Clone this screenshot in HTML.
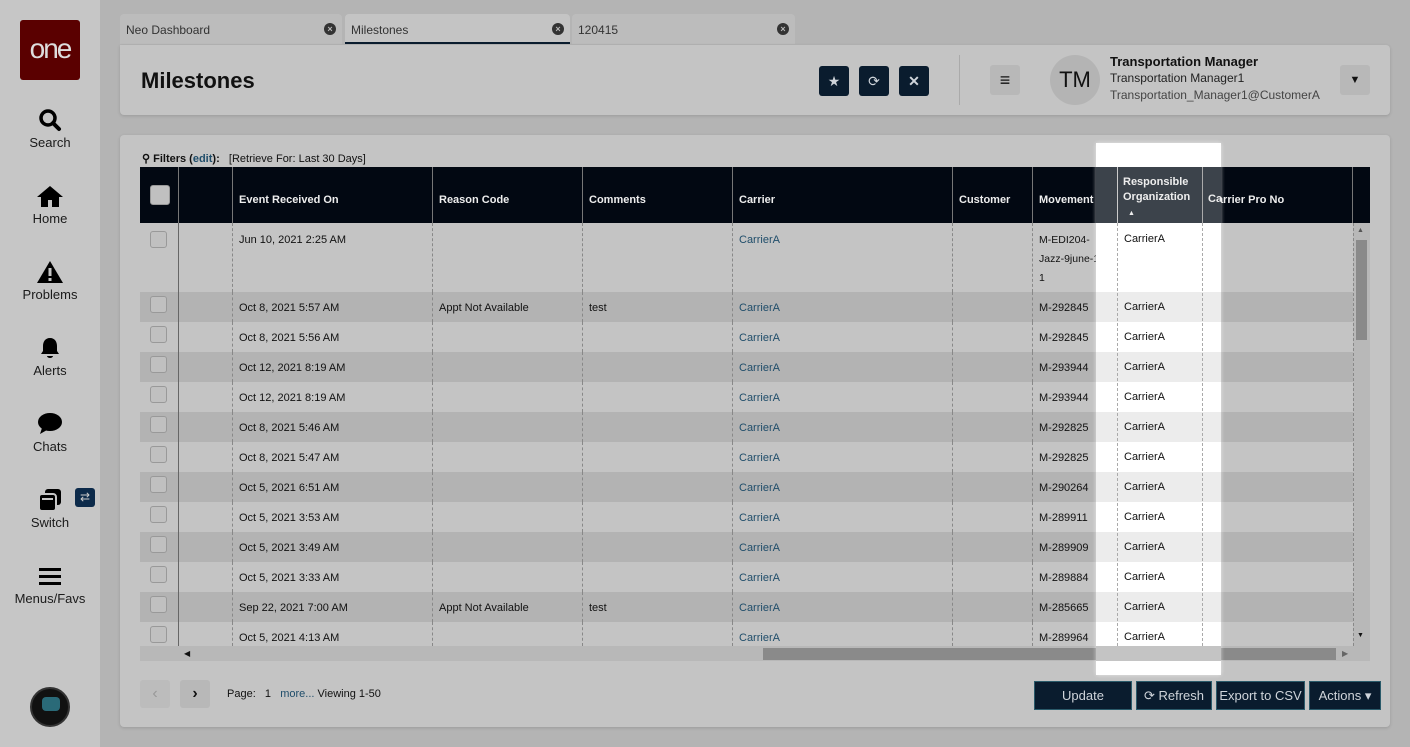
<!DOCTYPE html>
<html><head><meta charset="utf-8"><style>
*{box-sizing:border-box;margin:0;padding:0}
body{width:1410px;height:747px;background:#b4b4b4;font-family:"Liberation Sans",sans-serif;position:relative;overflow:hidden;color:#111}
.a{position:absolute}
.side{left:0;top:0;width:100px;height:747px;background:#c6c6c6}
.nav{width:100px;text-align:center;font-size:13px;color:#1a1a1a}
.tab{top:14px;height:30px;background:#bcbcbc;border-radius:4px 4px 0 0;font-size:12px;padding:9px 6px;color:#333}
.tab .x{position:absolute;right:6px;top:9px;width:12px;height:12px;border-radius:50%;background:#333;color:#bbb;font-size:9px;line-height:12px;text-align:center;font-weight:bold}
.card{background:#c4c4c4;border-radius:4px;box-shadow:0 1px 3px rgba(0,0,0,.15)}
.ib{width:30px;height:30px;background:#0a1c2e;border-radius:3px;color:#cfd4da;text-align:center;line-height:30px;font-size:14px}
.row{position:absolute;left:140px;width:1213px;display:flex;font-size:11px}
.row div{flex:none;border-right:1px dashed #888;padding:8px 6px;line-height:19px}
.row div:nth-child(1){border-right:1px solid #666}
.r div{padding-top:7px!important}
.hd div{color:#eee;font-weight:bold;border-right:1px solid #777!important;display:flex;align-items:center;padding-top:18px}
.cb{width:17px;height:17px;border:1px solid #999;border-radius:3px;background:#c0c0c0;margin-left:4px}
.lnk{color:#1f4d6a}
.btn{top:681px;height:29px;background:#0a1c2e;border:1px solid #2a5a6a;color:#cfd4da;font-size:13px;text-align:center;line-height:27px}
</style></head><body>
<div class="a side"></div>
<div class="a" style="left:20px;top:20px;width:60px;height:60px;background:#5a0000;border-radius:3px;color:#ddd;font-size:28px;text-align:center;line-height:58px;letter-spacing:-2px">one</div>
<div class="a nav" style="top:108px"><svg width="24" height="24" viewBox="0 0 24 24"><circle cx="10" cy="10" r="7" stroke="#000" stroke-width="3.5" fill="none"/><path d="M15 15l6 6" stroke="#000" stroke-width="4" stroke-linecap="round"/></svg><br>Search</div>
<div class="a nav" style="top:184px"><svg width="28" height="24" viewBox="0 0 28 24"><path d="M14 2L1 13h4v10h7v-7h4v7h7V13h4z" fill="#000"/></svg><br>Home</div>
<div class="a nav" style="top:260px"><svg width="28" height="24" viewBox="0 0 28 24"><path d="M14 1L1 23h26z" fill="#000"/><rect x="12.5" y="8" width="3" height="8" fill="#c6c6c6"/><rect x="12.5" y="18" width="3" height="3" fill="#c6c6c6"/></svg><br>Problems</div>
<div class="a nav" style="top:336px"><svg width="24" height="24" viewBox="0 0 24 24"><path d="M12 2c-5 0-7 4-7 8v5l-2 3h18l-2-3v-5c0-4-2-8-7-8z M9 20h6a3 2 0 0 1-6 0z" fill="#000"/></svg><br>Alerts</div>
<div class="a nav" style="top:412px"><svg width="26" height="24" viewBox="0 0 26 24"><ellipse cx="13" cy="10" rx="12" ry="9" fill="#000"/><path d="M5 16l-2 6 7-4z" fill="#000"/></svg><br>Chats</div>
<div class="a nav" style="top:488px"><svg width="26" height="24" viewBox="0 0 26 24"><rect x="8" y="1" width="16" height="16" rx="3" fill="#000"/><rect x="2" y="6" width="17" height="17" rx="3" fill="#000" stroke="#c6c6c6" stroke-width="2"/><rect x="5" y="10" width="11" height="2" fill="#c6c6c6"/></svg><br>Switch</div>
<div class="a" style="left:75px;top:488px;width:20px;height:19px;background:#0c2a4a;border-radius:3px;color:#ccc;font-size:12px;text-align:center;line-height:19px">⇄</div>
<div class="a nav" style="top:566px"><svg width="24" height="22" viewBox="0 0 24 22"><rect x="1" y="2" width="22" height="3" fill="#000"/><rect x="1" y="9" width="22" height="3" fill="#000"/><rect x="1" y="16" width="22" height="3" fill="#000"/></svg><br>Menus/Favs</div>
<div class="a" style="left:30px;top:687px;width:40px;height:40px;border-radius:50%;background:#111;border:2px solid #333"><div class="a" style="left:10px;top:8px;width:18px;height:14px;background:#2a6a78;border-radius:4px"></div></div>

<div class="a tab" style="left:120px;width:222px">Neo Dashboard<span class="x">×</span></div>
<div class="a tab" style="left:345px;width:225px;background:#c4c4c4;border-bottom:2px solid #0a1c2e">Milestones<span class="x">×</span></div>
<div class="a tab" style="left:572px;width:223px">120415<span class="x">×</span></div>

<div class="a card" style="left:120px;top:45px;width:1270px;height:70px;border-radius:0 4px 4px 4px"></div>
<div class="a" style="left:141px;top:68px;font-size:22px;font-weight:bold;color:#111">Milestones</div>
<div class="a ib" style="left:819px;top:66px">★</div>
<div class="a ib" style="left:859px;top:66px">⟳</div>
<div class="a ib" style="left:899px;top:66px;font-weight:bold">✕</div>
<div class="a" style="left:959px;top:55px;width:1px;height:50px;background:#aaa"></div>
<div class="a" style="left:990px;top:65px;width:30px;height:30px;background:#b8b8b8;border-radius:3px;text-align:center;line-height:30px;font-size:18px;font-weight:bold">≡</div>
<div class="a" style="left:1050px;top:55px;width:50px;height:50px;border-radius:50%;background:#b4b4b4;text-align:center;line-height:50px;font-size:22px;color:#111">TM</div>
<div class="a" style="left:1110px;top:54px;font-size:13px;font-weight:bold">Transportation Manager</div>
<div class="a" style="left:1110px;top:71px;font-size:12px;color:#222">Transportation Manager1</div>
<div class="a" style="left:1110px;top:88px;font-size:12px;color:#444">Transportation_Manager1@CustomerA</div>
<div class="a" style="left:1340px;top:65px;width:30px;height:30px;background:#b8b8b8;border-radius:3px;text-align:center;line-height:30px;font-size:11px">▼</div>

<div class="a card" style="left:120px;top:135px;width:1270px;height:592px"></div>
<div class="a" style="left:142px;top:152px;font-size:11px"><b>⚲ Filters (<span class="lnk">edit</span>):</b>&nbsp;&nbsp; [Retrieve For: Last 30 Days]</div>

<div class="a" style="left:140px;top:167px;width:1230px;height:56px;background:#020812"></div>
<div class="row hd" style="top:167px;height:56px">
<div style="width:39px;padding:0"><span class="cb" style="margin-left:10px;width:20px;height:20px"></span></div><div style="width:54px"></div><div style="width:200px">Event Received On</div><div style="width:150px">Reason Code</div><div style="width:150px">Comments</div><div style="width:220px">Carrier</div><div style="width:80px">Customer</div><div style="width:85px">Movement</div><div style="width:85px"></div><div style="width:150px">Carrier Pro No</div></div>

<div class="a" style="left:140px;top:223px;width:1213px;height:423px;background:#c4c4c4"></div>
<div class="row" style="top:223px;height:69px;background:#c4c4c4"><div style="width:39px"><span class="cb" style="display:block"></span></div><div style="width:54px"></div><div style="width:200px">Jun 10, 2021 2:25 AM</div><div style="width:150px"></div><div style="width:150px"></div><div style="width:220px" class="lnk">CarrierA</div><div style="width:80px"></div><div style="width:85px;padding-right:0;font-size:10.5px">M-EDI204-<br>Jazz-9june-10-<br>1</div><div style="width:85px">CarrierA</div><div style="width:150px;border:none"></div></div>
<div class="row r" style="top:292px;height:30px;background:#b3b3b3"><div style="width:39px"><span class="cb" style="display:block;margin-top:-3px"></span></div><div style="width:54px"></div><div style="width:200px">Oct 8, 2021 5:57 AM</div><div style="width:150px">Appt Not Available</div><div style="width:150px">test</div><div style="width:220px" class="lnk">CarrierA</div><div style="width:80px"></div><div style="width:85px">M-292845</div><div style="width:85px">CarrierA</div><div style="width:150px;border:none"></div></div>
<div class="row r" style="top:322px;height:30px"><div style="width:39px"><span class="cb" style="display:block;margin-top:-3px"></span></div><div style="width:54px"></div><div style="width:200px">Oct 8, 2021 5:56 AM</div><div style="width:150px"></div><div style="width:150px"></div><div style="width:220px" class="lnk">CarrierA</div><div style="width:80px"></div><div style="width:85px">M-292845</div><div style="width:85px">CarrierA</div><div style="width:150px;border:none"></div></div>
<div class="row r" style="top:352px;height:30px;background:#b3b3b3"><div style="width:39px"><span class="cb" style="display:block;margin-top:-3px"></span></div><div style="width:54px"></div><div style="width:200px">Oct 12, 2021 8:19 AM</div><div style="width:150px"></div><div style="width:150px"></div><div style="width:220px" class="lnk">CarrierA</div><div style="width:80px"></div><div style="width:85px">M-293944</div><div style="width:85px">CarrierA</div><div style="width:150px;border:none"></div></div>
<div class="row r" style="top:382px;height:30px"><div style="width:39px"><span class="cb" style="display:block;margin-top:-3px"></span></div><div style="width:54px"></div><div style="width:200px">Oct 12, 2021 8:19 AM</div><div style="width:150px"></div><div style="width:150px"></div><div style="width:220px" class="lnk">CarrierA</div><div style="width:80px"></div><div style="width:85px">M-293944</div><div style="width:85px">CarrierA</div><div style="width:150px;border:none"></div></div>
<div class="row r" style="top:412px;height:30px;background:#b3b3b3"><div style="width:39px"><span class="cb" style="display:block;margin-top:-3px"></span></div><div style="width:54px"></div><div style="width:200px">Oct 8, 2021 5:46 AM</div><div style="width:150px"></div><div style="width:150px"></div><div style="width:220px" class="lnk">CarrierA</div><div style="width:80px"></div><div style="width:85px">M-292825</div><div style="width:85px">CarrierA</div><div style="width:150px;border:none"></div></div>
<div class="row r" style="top:442px;height:30px"><div style="width:39px"><span class="cb" style="display:block;margin-top:-3px"></span></div><div style="width:54px"></div><div style="width:200px">Oct 8, 2021 5:47 AM</div><div style="width:150px"></div><div style="width:150px"></div><div style="width:220px" class="lnk">CarrierA</div><div style="width:80px"></div><div style="width:85px">M-292825</div><div style="width:85px">CarrierA</div><div style="width:150px;border:none"></div></div>
<div class="row r" style="top:472px;height:30px;background:#b3b3b3"><div style="width:39px"><span class="cb" style="display:block;margin-top:-3px"></span></div><div style="width:54px"></div><div style="width:200px">Oct 5, 2021 6:51 AM</div><div style="width:150px"></div><div style="width:150px"></div><div style="width:220px" class="lnk">CarrierA</div><div style="width:80px"></div><div style="width:85px">M-290264</div><div style="width:85px">CarrierA</div><div style="width:150px;border:none"></div></div>
<div class="row r" style="top:502px;height:30px"><div style="width:39px"><span class="cb" style="display:block;margin-top:-3px"></span></div><div style="width:54px"></div><div style="width:200px">Oct 5, 2021 3:53 AM</div><div style="width:150px"></div><div style="width:150px"></div><div style="width:220px" class="lnk">CarrierA</div><div style="width:80px"></div><div style="width:85px">M-289911</div><div style="width:85px">CarrierA</div><div style="width:150px;border:none"></div></div>
<div class="row r" style="top:532px;height:30px;background:#b3b3b3"><div style="width:39px"><span class="cb" style="display:block;margin-top:-3px"></span></div><div style="width:54px"></div><div style="width:200px">Oct 5, 2021 3:49 AM</div><div style="width:150px"></div><div style="width:150px"></div><div style="width:220px" class="lnk">CarrierA</div><div style="width:80px"></div><div style="width:85px">M-289909</div><div style="width:85px">CarrierA</div><div style="width:150px;border:none"></div></div>
<div class="row r" style="top:562px;height:30px"><div style="width:39px"><span class="cb" style="display:block;margin-top:-3px"></span></div><div style="width:54px"></div><div style="width:200px">Oct 5, 2021 3:33 AM</div><div style="width:150px"></div><div style="width:150px"></div><div style="width:220px" class="lnk">CarrierA</div><div style="width:80px"></div><div style="width:85px">M-289884</div><div style="width:85px">CarrierA</div><div style="width:150px;border:none"></div></div>
<div class="row r" style="top:592px;height:30px;background:#b3b3b3"><div style="width:39px"><span class="cb" style="display:block;margin-top:-3px"></span></div><div style="width:54px"></div><div style="width:200px">Sep 22, 2021 7:00 AM</div><div style="width:150px">Appt Not Available</div><div style="width:150px">test</div><div style="width:220px" class="lnk">CarrierA</div><div style="width:80px"></div><div style="width:85px">M-285665</div><div style="width:85px">CarrierA</div><div style="width:150px;border:none"></div></div>
<div class="row r" style="top:622px;height:24px;overflow:hidden"><div style="width:39px"><span class="cb" style="display:block;margin-top:-3px"></span></div><div style="width:54px"></div><div style="width:200px">Oct 5, 2021 4:13 AM</div><div style="width:150px"></div><div style="width:150px"></div><div style="width:220px" class="lnk">CarrierA</div><div style="width:80px"></div><div style="width:85px">M-289964</div><div style="width:85px">CarrierA</div><div style="width:150px;border:none"></div></div>

<!-- scrollbars -->
<div class="a" style="left:1353px;top:223px;width:17px;height:423px;background:#b8b8b8;border-left:1px dashed #888"></div>
<div class="a" style="left:1356px;top:240px;width:11px;height:100px;background:#8a8a8a"></div>
<div class="a" style="left:1357px;top:227px;font-size:7px;color:#555">▲</div>
<div class="a" style="left:1357px;top:632px;font-size:7px;color:#111">▼</div>
<div class="a" style="left:140px;top:646px;width:1230px;height:15px;background:#b8b8b8"></div>
<div class="a" style="left:763px;top:648px;width:573px;height:12px;background:#8a8a8a"></div>
<div class="a" style="left:184px;top:649px;font-size:8px">◀</div>
<div class="a" style="left:1342px;top:649px;font-size:8px;color:#666">▶</div>

<!-- highlight -->
<div class="a" style="left:1096px;top:143px;width:125px;height:532px;background:#fff;box-shadow:0 0 4px rgba(255,255,255,.6);overflow:hidden">
 <div class="a" style="left:0;top:24px;width:125px;height:56px;background:#3c434b"></div>
 <div class="a" style="left:21px;top:24px;width:1px;height:56px;background:#ccc"></div>
 <div class="a" style="left:106px;top:24px;width:1px;height:56px;background:#aaa"></div>
 <div class="a" style="left:-57px;top:49px;font-size:11px;font-weight:bold;color:#eee">Movement</div>
 <div class="a" style="left:27px;top:32px;font-size:11px;font-weight:bold;color:#eee;line-height:15px">Responsible<br>Organization<br><span style="font-size:7px;padding-left:5px">▲</span></div>
 <div class="a" style="left:112px;top:50px;font-size:11px;font-weight:bold;color:#eee">Ca</div>
 <div class="a" style="left:0;top:149px;width:125px;height:30px;background:#ececec"></div>
 <div class="a" style="left:0;top:209px;width:125px;height:30px;background:#ececec"></div>
 <div class="a" style="left:0;top:269px;width:125px;height:30px;background:#ececec"></div>
 <div class="a" style="left:0;top:329px;width:125px;height:30px;background:#ececec"></div>
 <div class="a" style="left:0;top:389px;width:125px;height:30px;background:#ececec"></div>
 <div class="a" style="left:0;top:449px;width:125px;height:30px;background:#ececec"></div>
 <div class="a" style="left:0;top:503px;width:125px;height:15px;background:#c4c4c4"></div>
 <div class="a" style="left:21px;top:80px;height:423px;border-left:1px dashed #aaa"></div>
 <div class="a" style="left:106px;top:80px;height:423px;border-left:1px dashed #aaa"></div>
 <div class="a" style="left:28px;top:90px;font-size:11px;color:#111">CarrierA</div>
 <div class="a" style="left:28px;top:149px;font-size:11px;line-height:30px;color:#111">CarrierA<br>CarrierA<br>CarrierA<br>CarrierA<br>CarrierA<br>CarrierA<br>CarrierA<br>CarrierA<br>CarrierA<br>CarrierA<br>CarrierA<br>CarrierA</div>
</div>

<!-- footer -->
<div class="a" style="left:140px;top:680px;width:30px;height:28px;background:#bcbcbc;border-radius:3px;color:#999;text-align:center;line-height:28px">‹</div>
<div class="a" style="left:180px;top:680px;width:30px;height:28px;background:#b8b8b8;border-radius:3px;text-align:center;line-height:28px;font-weight:bold">›</div>
<div class="a" style="left:227px;top:688px;font-size:11px">Page:&nbsp;&nbsp; 1&nbsp;&nbsp; <span class="lnk">more...</span> Viewing 1-50</div>
<div class="a btn" style="left:1034px;width:98px">Update</div>
<div class="a btn" style="left:1136px;width:76px">⟳ Refresh</div>
<div class="a btn" style="left:1216px;width:89px">Export to CSV</div>
<div class="a btn" style="left:1309px;width:72px">Actions ▾</div>
</body></html>
